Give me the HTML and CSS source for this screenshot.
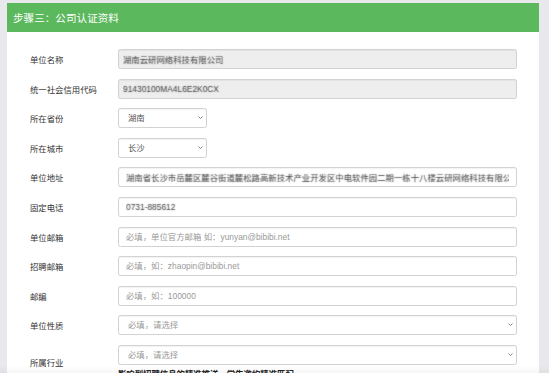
FILE: index.html
```html
<!DOCTYPE html>
<html lang="zh-CN">
    <head>
        <meta charset="UTF-8" />
        <meta name="viewport" content="width=device-width, initial-scale=1.0" />
        <title>公司认证资料</title>
        <link rel="stylesheet" href="styles.css">
    </head>
    <body>
        <section class="panel">
            <header class="panel-heading">步骤三：公司认证资料</header>
            <form class="panel-body">
                <div class="form-row">
                    <label class="form-label">单位名称</label>
                    <div class="form-control"><input class="field readonly masked" type="text" value="湖南云研网络科技有限公司" readonly /></div>
                </div>
                <div class="form-row">
                    <label class="form-label">统一社会信用代码</label>
                    <div class="form-control"><input class="field readonly masked" type="text" value="91430100MA4L6E2K0CX" readonly /></div>
                </div>
                <div class="form-row">
                    <label class="form-label">所在省份</label>
                    <div class="form-control">
                        <div class="select-wrap short">
                            <select class="field"><option>湖南</option></select>
                            <svg class="chevron" viewBox="0 0 10 6"><path d="M1 1l4 4 4-4" /></svg>
                        </div>
                    </div>
                </div>
                <div class="form-row">
                    <label class="form-label">所在城市</label>
                    <div class="form-control">
                        <div class="select-wrap short">
                            <select class="field"><option>长沙</option></select>
                            <svg class="chevron" viewBox="0 0 10 6"><path d="M1 1l4 4 4-4" /></svg>
                        </div>
                    </div>
                </div>
                <div class="form-row">
                    <label class="form-label">单位地址</label>
                    <div class="form-control"><input class="field masked" type="text" value="湖南省长沙市岳麓区麓谷街道麓松路高新技术产业开发区中电软件园二期一栋十八楼云研网络科技有限公司" /></div>
                </div>
                <div class="form-row">
                    <label class="form-label">固定电话</label>
                    <div class="form-control"><input class="field masked" type="text" value="0731-885612" /></div>
                </div>
                <div class="form-row">
                    <label class="form-label">单位邮箱</label>
                    <div class="form-control"><input class="field" type="text" placeholder="必填，单位官方邮箱 如：yunyan@bibibi.net" /></div>
                </div>
                <div class="form-row">
                    <label class="form-label">招聘邮箱</label>
                    <div class="form-control"><input class="field" type="text" placeholder="必填，如：zhaopin@bibibi.net" /></div>
                </div>
                <div class="form-row">
                    <label class="form-label">邮编</label>
                    <div class="form-control"><input class="field" type="text" placeholder="必填，如：100000" /></div>
                </div>
                <div class="form-row">
                    <label class="form-label">单位性质</label>
                    <div class="form-control">
                        <div class="select-wrap">
                            <select class="field empty"><option>必填，请选择</option></select>
                            <svg class="chevron" viewBox="0 0 10 6"><path d="M1 1l4 4 4-4" /></svg>
                        </div>
                    </div>
                </div>
                <div class="form-row">
                    <label class="form-label">所属行业</label>
                    <div class="form-control">
                        <div class="select-wrap">
                            <select class="field empty"><option>必填，请选择</option></select>
                            <svg class="chevron" viewBox="0 0 10 6"><path d="M1 1l4 4 4-4" /></svg>
                        </div>
                        <p class="help">影响到招聘信息的精准推送，学生邀约精准匹配</p>
                    </div>
                </div>
            </form>
        </section>
        <div class="bottom-fade"></div>
    </body>
</html>
```

FILE: styles.css
```css
* {
    margin: 0;
    padding: 0;
    box-sizing: border-box;
}
body {
    font-family: "Liberation Sans", "Noto Sans CJK SC", sans-serif;
    font-size: 8.4px;
    color: #333;
    background: #e8e8ed;
    overflow: hidden;
}
.panel {
    margin: 3px 0 0 7px;
    width: 532px;
    background: #fff;
}
.panel-heading {
    height: 29px;
    padding: 0 6px;
    display: flex;
    align-items: center;
    color: #fff;
    font-size: 10.6px;
    background: #5cb85c;
}
.panel-body {
    padding: 17px 22px 20px 23px;
}
.form-row {
    display: flex;
    align-items: center;
    margin-bottom: 9.6px;
}
.form-label {
    width: 88px;
    flex: none;
}
.form-control {
    flex: 1;
}
.field {
    display: block;
    width: 100%;
    height: 20px;
    padding: 0 7px;
    font-family: inherit;
    font-size: 8.4px;
    color: #555;
    background: #fff;
    border: 1px solid #d2d2d2;
    border-radius: 2.4px;
    outline: none;
    appearance: none;
    box-shadow: inset 0 1px 1px rgba(0, 0, 0, 0.05);
}
.field::placeholder {
    color: #999;
}
.readonly {
    background: #eee;
    padding-left: 4px;
}
/* blurred values, like the screenshot */
.masked {
    color: rgba(60, 60, 60, 0.25);
    text-shadow: 0 0 1.2px #555;
}
.select-wrap {
    position: relative;
}
.select-wrap.short {
    width: 89px;
}
.select-wrap .field {
    padding-left: 9px;
}
.field.empty {
    color: #999;
}
.chevron {
    position: absolute;
    right: 4px;
    top: 8px;
    width: 5px;
    height: 3px;
    fill: none;
    stroke: #666;
    stroke-width: 1.6;
}
.help {
    margin-top: 2px;
    font-weight: 700;
    color: #222;
}
.bottom-fade {
    position: fixed;
    left: 0;
    right: 0;
    bottom: 0;
    height: 8px;
    background: linear-gradient(to bottom, rgba(0, 0, 0, 0), rgba(0, 0, 0, 0.03));
    pointer-events: none;
}
```
